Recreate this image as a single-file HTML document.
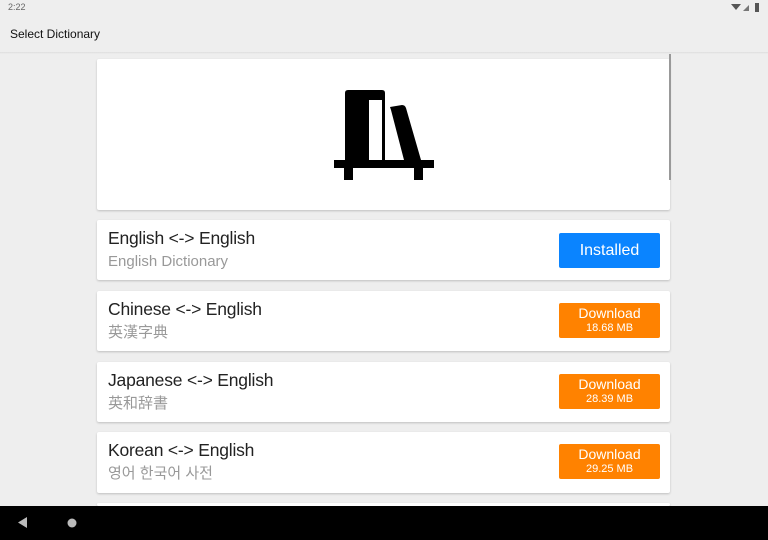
<!DOCTYPE html>
<html><head><meta charset="utf-8"><style>
body{margin:0;width:768px;height:540px;background:#eeeeee;font-family:"Liberation Sans","Noto Sans CJK SC",sans-serif;position:relative;overflow:hidden}
.status{position:absolute;left:8px;top:2px;font-size:9px;color:#666}
.title{position:absolute;left:10px;top:27px;font-size:12px;color:#111}
.bar{position:absolute;left:0;top:52px;width:768px;height:2px;background:linear-gradient(#ddd,#eee)}
.card{position:absolute;left:97px;width:573px;background:#fff;box-shadow:0 1px 2px rgba(0,0,0,.2);border-radius:2px}
.t1{position:absolute;left:11px;top:8px;font-size:17.5px;color:#222;letter-spacing:-0.2px}
.t2{position:absolute;left:11px;top:33px;font-size:15px;color:#999}
.cjk{top:30px}
.btn{position:absolute;left:462px;width:101px;border-radius:2px;color:#fff;text-align:center}
.inst{top:13px;height:35px;background:#0a84ff;font-size:16px;line-height:35px}
.dl{top:12px;height:35px;background:#ff8200}
.dl .a{font-size:14px;margin-top:2px}.dl .b{font-size:11px;margin-top:1px}
.nav{position:absolute;left:0;top:506px;width:768px;height:34px;background:#000}
.sb{position:absolute;left:669px;top:54px;width:2px;height:126px;background:#999}
</style></head><body>
<div class="status">2:22</div>
<svg style="position:absolute;left:731px;top:3px" width="30" height="9"><path d="M0 1 L10 1 L5 7Z" fill="#555"/><path d="M12 8 L18 2 L18 8Z" fill="#777"/><rect x="24" y="0" width="4" height="9" fill="#555"/></svg>
<div class="title">Select Dictionary</div>
<div class="bar"></div>
<div class="card" style="top:59px;height:151px">
<svg style="position:absolute;left:237px;top:31px" width="100" height="91" viewBox="0 0 100 91">
<path d="M14 0 H48 Q51 0 51 3 V70 H11 V3 Q11 0 14 0Z M35 10 V71 H48 V10Z" fill="#000" fill-rule="evenodd"/>
<path d="M56 17 L68 15 Q71 15 72 18 L87 70 L70 70 L57 20Z" fill="#000"/>
<rect x="0" y="70" width="100" height="8" fill="#000"/>
<rect x="10" y="78" width="9" height="12" fill="#000"/>
<rect x="80" y="78" width="9" height="12" fill="#000"/>
</svg>
</div>
<div class="card" style="top:220px;height:60px"><div class="t1">English &lt;-&gt; English</div><div class="t2">English Dictionary</div><div class="btn inst">Installed</div></div>
<div class="card" style="top:291px;height:60px"><div class="t1">Chinese &lt;-&gt; English</div><div class="t2 cjk">英漢字典</div><div class="btn dl"><div class="a">Download</div><div class="b">18.68 MB</div></div></div>
<div class="card" style="top:362px;height:60px"><div class="t1">Japanese &lt;-&gt; English</div><div class="t2 cjk" style="font-family:'Liberation Sans','Noto Sans CJK JP',sans-serif">英和辞書</div><div class="btn dl"><div class="a">Download</div><div class="b">28.39 MB</div></div></div>
<div class="card" style="top:432px;height:61px"><div class="t1">Korean &lt;-&gt; English</div><div class="t2 cjk" style="font-family:'Liberation Sans','Noto Sans CJK KR',sans-serif">영어 한국어 사전</div><div class="btn dl"><div class="a">Download</div><div class="b">29.25 MB</div></div></div>
<div class="card" style="top:503px;height:3px"></div>
<div class="sb"></div>
<div class="nav">
<svg style="position:absolute;left:18px;top:11px" width="10" height="11"><path d="M9 0 L0 5.5 L9 11Z" fill="#bbb"/></svg>
<svg style="position:absolute;left:67px;top:12px" width="10" height="10"><circle cx="5" cy="5" r="4.5" fill="#bbb"/></svg>
</div>
</body></html>
